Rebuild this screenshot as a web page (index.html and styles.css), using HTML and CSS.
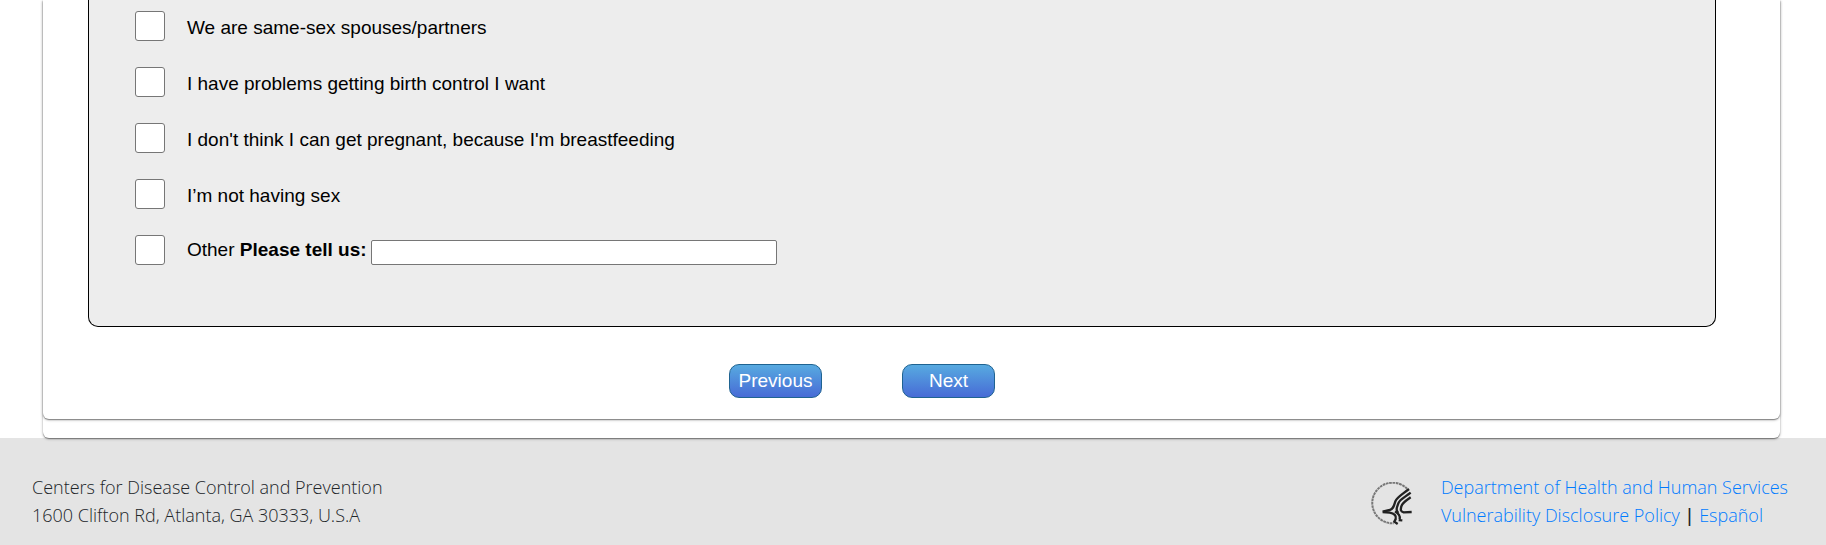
FILE: index.html
```html
<!DOCTYPE html>
<html lang="en">
<head>
<meta charset="utf-8">
<title>Survey</title>
<link rel="stylesheet" href="styles.css">
</head>
<body>
<main class="page">
  <form class="card">
    <fieldset class="panel">
      <label class="option"><input class="tick" type="checkbox"><span class="option-text">We are same-sex spouses/partners</span></label>
      <label class="option"><input class="tick" type="checkbox"><span class="option-text">I have problems getting birth control I want</span></label>
      <label class="option"><input class="tick" type="checkbox"><span class="option-text">I don't think I can get pregnant, because I'm breastfeeding</span></label>
      <label class="option"><input class="tick" type="checkbox"><span class="option-text">I’m not having sex</span></label>
      <div class="option">
        <input class="tick" type="checkbox" id="other">
        <div class="other">
          <label for="other">Other <b id="tell">Please tell us:</b></label>
          <input class="other-text" type="text" aria-labelledby="tell">
        </div>
      </div>
    </fieldset>
    <div class="actions">
      <button class="btn" type="button">Previous</button>
      <button class="btn" type="button">Next</button>
    </div>
  </form>
</main>
<footer class="footer">
  <address class="address">Centers for Disease Control and Prevention<br>1600 Clifton Rd, Atlanta, GA 30333, U.S.A</address>
  <div class="agency">
    <svg class="seal" viewBox="30 36 132 132" role="img" aria-label="Department of Health and Human Services seal">
      <path class="ring" d="M144 56 A61 61 0 1 0 104 160"/>
      <g class="eagle">
        <path d="M150 57 C132 72 113 82 109 94 C105 108 103 117 92 120 L71 125"/>
        <path d="M155 68 C137 82 122 88 118 100 C114 112 109 119 118 129"/>
        <path d="M155 82 C140 92 130 98 127 109 C125 118 123 124 134 127 L158 126"/>
        <path d="M71 126 L92 128 C106 130 113 137 110 147 L106 155 L116 162"/>
        <path d="M108 124 C119 132 124 137 122 148 M119 150 L130 151"/>
      </g>
    </svg>
    <nav class="links">
      <a href="#">Department of Health and Human Services</a><br>
      <a href="#">Vulnerability Disclosure Policy</a> <span class="bar">|</span> <a href="#">Español</a>
    </nav>
  </div>
</footer>
</body>
</html>
```
FILE: styles.css
```css
* { box-sizing: border-box; }

body {
  margin: 0;
  min-height: 100vh;
  display: flex;
  flex-direction: column;
  background: #fff;
  color: #000;
  font: 19px/30px "Liberation Sans", Arial, sans-serif;
}

.page,
.card {
  background: #fff;
  border-radius: 0 0 6px 6px;
  box-shadow: 0 1px 1px rgba(0, 0, 0, .35), 0 1px 3px rgba(0, 0, 0, .3);
}

.page {
  position: relative;
  margin: 0 46px 0 43px;
  padding-bottom: 19px;
}

.card { padding: 0 64px 21px 45px; }

.panel {
  display: grid;
  gap: 26px;
  margin: 0;
  padding: 11px 46px 61px;
  min-width: 0;
  border: 1px solid #000;
  border-top: 0;
  border-radius: 0 0 10px 10px;
  background: #ededed;
}

.option {
  display: flex;
  align-items: center;
  gap: 22px;
  height: 30px;
}

.option-text { padding-top: 4px; }

.tick {
  appearance: none;
  flex: none;
  width: 30px;
  height: 30px;
  margin: 0;
  border: 1px solid #767676;
  border-radius: 3px;
  background: #fff;
}

.tick:checked { background: #0075ff; }

.other {
  display: flex;
  align-items: center;
  gap: 4px;
}

.other-text {
  width: 406px;
  height: 25px;
  margin: 4px 0 0;
  padding: 1px 2px;
  border: 1px solid #767676;
  border-radius: 2px;
  background: #fff;
  font: inherit;
}

.actions {
  display: flex;
  justify-content: center;
  gap: 80px;
  padding: 37px 80px 0 0;
}

.btn {
  width: 93px;
  height: 34px;
  padding: 0;
  border: 1px solid #1f6391;
  border-radius: 10px;
  background: linear-gradient(#57aae0, #476bd6);
  color: #fff;
  font: 19px/30px "Liberation Sans", Arial, sans-serif;
}

.footer {
  flex: 1;
  display: flex;
  justify-content: space-between;
  align-items: flex-start;
  padding: 35px 38px 16px 32px;
  background: #e4e4e4;
  color: #212529;
  font: 300 18px/28px "Open Sans", "Segoe UI", sans-serif;
}

.address { font-style: normal; }

.agency {
  display: flex;
  gap: 28px;
}

.seal {
  width: 44px;
  height: 44px;
  margin-top: 9px;
}

.ring {
  fill: none;
  stroke: #777;
  stroke-width: 6;
  stroke-dasharray: 8 2;
}

.eagle {
  fill: none;
  stroke: #222;
  stroke-width: 7;
}

.bar { font-weight: 600; }

.links a {
  color: #007bff;
  text-decoration: none;
}
```
